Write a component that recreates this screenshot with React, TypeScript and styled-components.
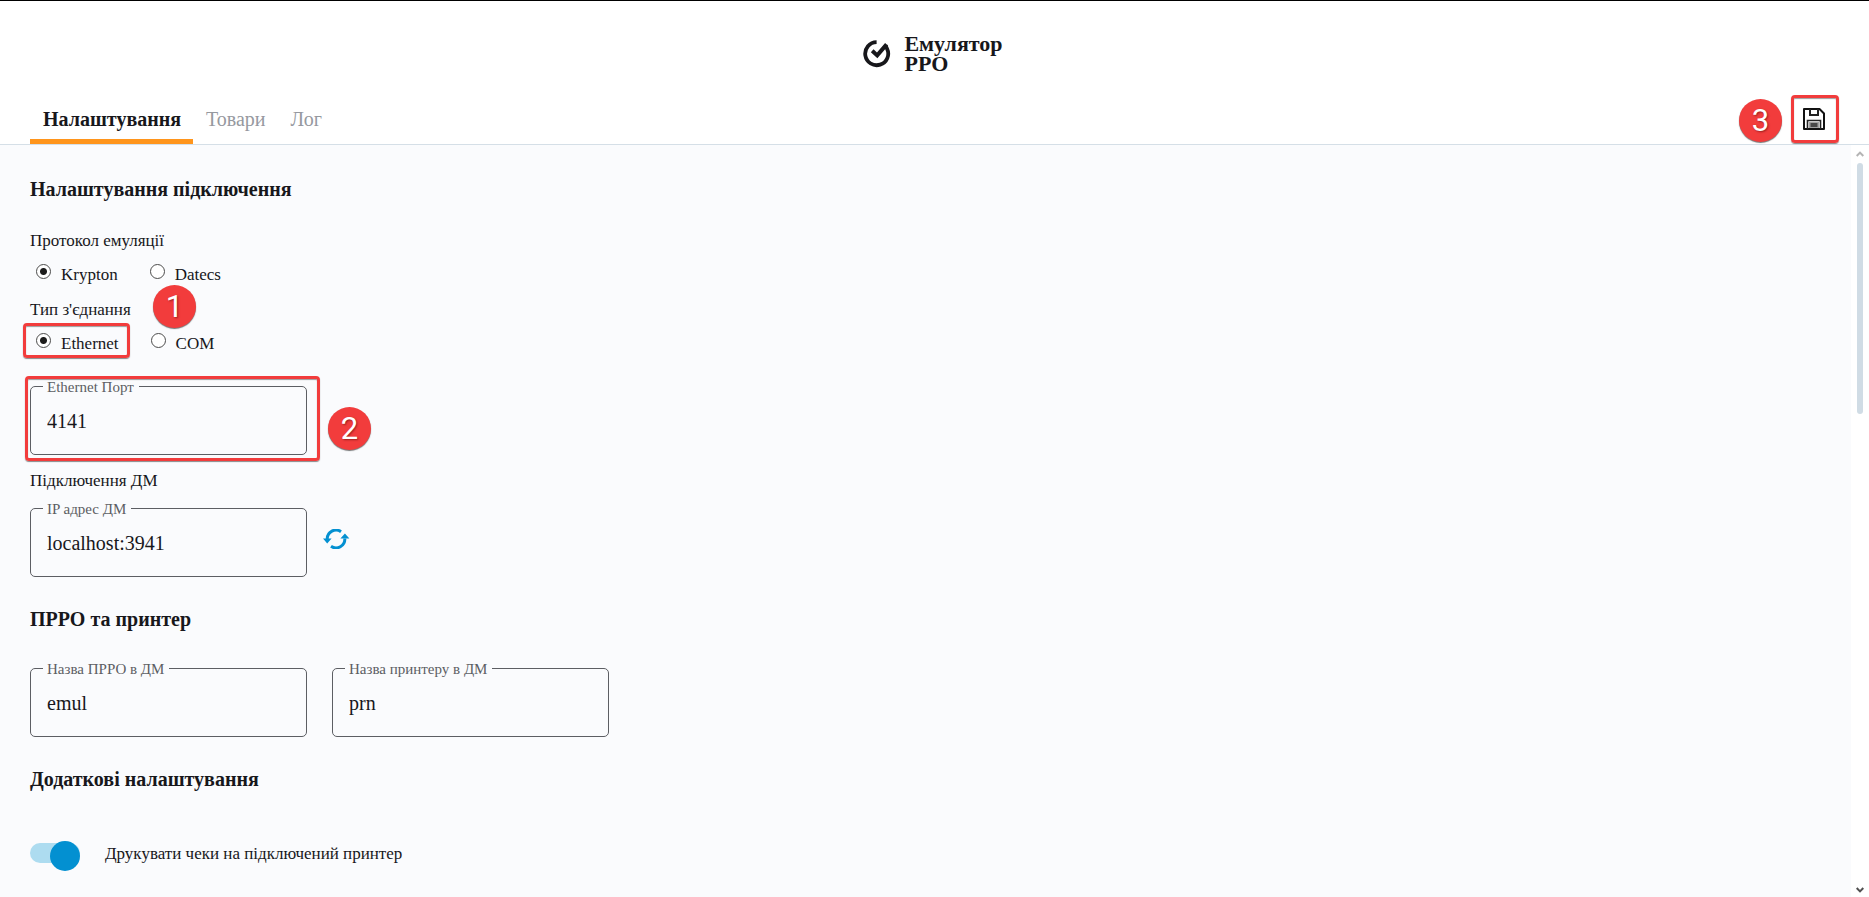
import React, { useState } from "react";
import styled, { createGlobalStyle, css } from "styled-components";

const serif = `"Liberation Serif", "Times New Roman", serif`;
const colors = {
  ink: "#17171b",
  muted: "#96999f",
  outline: "#5c5e63",
  surface: "#fafbfd",
  line: "#d5dfe7",
  accent: "#ff951c",
  blue: "#0390d1",
  blueLight: "#addcf0",
  mark: "#f23c3c",
};

const GlobalStyle = createGlobalStyle`
  *, *::before, *::after { box-sizing: border-box; }
  body { margin: 0; background: #fff; color: ${colors.ink}; font-family: ${serif}; }
  button, input { font-family: inherit; color: inherit; }
`;

const Page = styled.div`
  display: flex;
  flex-direction: column;
  min-height: 100vh;
  border-top: 1px solid #000;
`;

const Brand = styled.div`
  display: flex;
  align-items: center;
  justify-content: center;
  gap: 13px;
  padding: 33px 3px 21px 0;
`;

const BrandName = styled.h1`
  margin: 0;
  font-size: 22px;
  line-height: 20px;
`;

const Bar = styled.div`
  display: flex;
  align-items: flex-end;
  justify-content: space-between;
  padding: 0 30px;
  border-bottom: 1px solid ${colors.line};
`;

const Tabs = styled.nav`
  display: flex;
`;

const Tab = styled.button<{ $active: boolean }>`
  padding: 0 12px 8px 13px;
  border: 0;
  border-bottom: 5px solid ${(p) => (p.$active ? colors.accent : "transparent")};
  background: none;
  color: ${(p) => (p.$active ? colors.ink : colors.muted)};
  font-size: 20px;
  font-weight: ${(p) => (p.$active ? 700 : 400)};
  line-height: 24px;
  cursor: pointer;
`;

const SaveSlot = styled.div`
  position: relative;
  margin-bottom: 1px;
`;

const SaveButton = styled.button`
  display: flex;
  align-items: center;
  justify-content: center;
  width: 48px;
  height: 48px;
  padding: 0 2px 0 0;
  border: 0;
  background: none;
  cursor: pointer;
`;

const Mark = styled.span<{ $inset: string }>`
  position: absolute;
  inset: ${(p) => p.$inset};
  border: 3px solid ${colors.mark};
  border-radius: 4px;
  box-shadow: 0 1px 1px rgba(60, 60, 60, 0.6), inset 0 1px 1px rgba(60, 60, 60, 0.5);
  pointer-events: none;
`;

const Step = styled.span<{ $left: number; $top: number }>`
  position: absolute;
  left: ${(p) => p.$left}px;
  top: ${(p) => p.$top}px;
  width: 43px;
  height: 43px;
  border-radius: 50%;
  background: ${colors.mark};
  box-shadow: 0 1px 1px rgba(60, 60, 60, 0.7);
  color: #fff;
  font: 400 31px/43px Roboto, sans-serif;
  text-align: center;
  text-shadow: 1px 1px 2px rgba(70, 0, 0, 0.5);
`;

const Body = styled.div`
  display: flex;
  flex: 1;
`;

const Content = styled.main`
  flex: 1;
  padding: 32px 30px;
  background: ${colors.surface};
`;

const Section = styled.section`
  & + & {
    margin-top: 30px;
  }
`;

const Heading = styled.h2`
  margin: 0;
  font-size: 20px;
  line-height: 24px;
`;

const caption = css`
  padding: 0;
  font-size: 17px;
  line-height: 22px;
`;

const Group = styled.fieldset<{ $gap: number }>`
  position: relative;
  min-width: 0;
  margin: ${(p) => p.$gap}px 0 0;
  padding: 0;
  border: 0;
`;

const Legend = styled.legend`
  ${caption}
`;

const Caption = styled.p`
  ${caption}
  margin: 15px 0 16px;
`;

const Options = styled.div`
  display: flex;
  gap: 32px;
  padding: 12px 0 0 6px;
`;

const Option = styled.label`
  ${caption}
  position: relative;
  display: flex;
  align-items: flex-start;
  gap: 10px;
`;

const Radio = styled.input`
  appearance: none;
  width: 15px;
  height: 15px;
  margin: 0;
  border: 1px solid #4c4c4c;
  border-radius: 50%;
  background: #fff;

  &:checked {
    background: radial-gradient(circle, #1c1c1c 3px, #fff 4px);
  }
`;

const Fields = styled.div<{ $gap?: number }>`
  display: flex;
  align-items: flex-start;
  gap: 25px;
  margin-top: ${(p) => p.$gap ?? 0}px;
`;

const FieldBox = styled.div`
  position: relative;
  width: 277px;
`;

const FieldLabel = styled.label`
  position: absolute;
  left: 13px;
  top: -7px;
  padding: 0 5px 0 4px;
  background: ${colors.surface};
  color: ${colors.outline};
  font-size: 15px;
  line-height: 16px;
`;

const FieldInput = styled.input`
  display: block;
  width: 100%;
  height: 69px;
  padding: 2px 16px 0;
  border: 1px solid ${colors.outline};
  border-radius: 5px;
  background: transparent;
  font-size: 20px;
`;

const Server = styled.div`
  display: flex;
  align-items: flex-start;
  gap: 16px;
`;

const RefreshButton = styled.button`
  display: flex;
  padding: 21px 0;
  border: 0;
  background: none;
  color: ${colors.blue};
  cursor: pointer;
`;

const SwitchRow = styled.label`
  ${caption}
  display: flex;
  align-items: flex-start;
  gap: 25px;
  margin-top: 52px;
`;

const Switch = styled.input`
  appearance: none;
  position: relative;
  width: 50px;
  height: 20px;
  margin: 0;
  border-radius: 10px;
  background: #cfd4d9;
  cursor: pointer;

  &::after {
    content: "";
    position: absolute;
    left: 0;
    top: -2px;
    width: 30px;
    height: 30px;
    border-radius: 50%;
    background: #8b9097;
  }
  &:checked {
    background: ${colors.blueLight};
  }
  &:checked::after {
    left: 20px;
    background: ${colors.blue};
  }
`;

const ScrollRail = styled.div`
  display: flex;
  flex-direction: column;
  align-items: center;
  width: 18px;
  padding: 6px 0 4px;
  background: #fff;
`;

const ScrollThumb = styled.div`
  flex: 25;
  width: 6px;
  margin-top: 6px;
  border-radius: 3px;
  background: #d0dce5;
`;

const ScrollRest = styled.div`
  flex: 47;
`;

const Logo = () => (
  <svg width="28" height="28" viewBox="0 0 28 28" fill="none" stroke="#17171b" strokeWidth="3.8" aria-hidden="true">
    <path d="M13.6 2.2A11.5 11.5 0 1 0 24 8.6L22.4 5.4" />
    <path d="M9.2 10.8 14.2 15.4 23.6 4.4" strokeWidth="4" />
  </svg>
);

const SaveIcon = () => (
  <svg width="22" height="22" viewBox="0 0 22 22" fill="none" aria-hidden="true">
    <path d="M1 1H16.5L21 5.5V21H1Z" stroke="#111" strokeWidth="2" strokeLinejoin="round" />
    <path d="M7 1V7H15V1" stroke="#222" strokeWidth="2" />
    <path d="M4.5 21V12.5H17.5V21" stroke="#222" strokeWidth="1.6" />
    <rect x="6" y="14" width="10" height="6" fill="#a2a2a2" />
    <rect x="7.5" y="15" width="7" height="4" fill="#484848" />
  </svg>
);

const RefreshIcon = () => (
  <svg width="27" height="20" viewBox="0 0 27 20" fill="none" aria-hidden="true">
    <path d="M4.2 10A8.8 8.8 0 0 1 18 2.7M21.8 9.5A8.8 8.8 0 0 1 8 17.3" stroke="currentColor" strokeWidth="3" />
    <path d="M0 9.6H8.6L4.2 14.6ZM17.4 9.6H26.4L21.9 4.6Z" fill="currentColor" />
  </svg>
);

const Arrow = ({ up = false }: { up?: boolean }) => (
  <svg width="8" height="6" viewBox="0 0 8 6" fill="none" strokeWidth="2" stroke={up ? "#b4b4b4" : "#505050"} aria-hidden="true">
    <path d={up ? "M.7 5 4 1.6 7.3 5" : "M.7 1 4 4.4 7.3 1"} />
  </svg>
);

type FieldProps = { id: string; label: string; value: string; children?: React.ReactNode };

const Field = ({ id, label, value, children }: FieldProps) => (
  <FieldBox>
    <FieldInput id={id} defaultValue={value} />
    <FieldLabel htmlFor={id}>{label}</FieldLabel>
    {children}
  </FieldBox>
);

const tabNames = ["Налаштування", "Товари", "Лог"];

export default function App() {
  const [tab, setTab] = useState(tabNames[0]);

  return (
    <Page>
      <GlobalStyle />
      <header>
        <Brand>
          <Logo />
          <BrandName>
            Емулятор
            <br />
            РРО
          </BrandName>
        </Brand>
        <Bar>
          <Tabs>
            {tabNames.map((name) => (
              <Tab key={name} type="button" $active={name === tab} onClick={() => setTab(name)}>
                {name}
              </Tab>
            ))}
          </Tabs>
          <SaveSlot>
            <SaveButton type="button" aria-label="Зберегти">
              <SaveIcon />
            </SaveButton>
            <Mark $inset="0" />
            <Step $left={-52} $top={4}>3</Step>
          </SaveSlot>
        </Bar>
      </header>
      <Body>
        <Content>
          <Section>
            <Heading>Налаштування підключення</Heading>
            <Group $gap={29}>
              <Legend>Протокол емуляції</Legend>
              <Options>
                <Option>
                  <Radio type="radio" name="protocol" defaultChecked />
                  Krypton
                </Option>
                <Option>
                  <Radio type="radio" name="protocol" />
                  Datecs
                </Option>
              </Options>
            </Group>
            <Group $gap={13}>
              <Legend>Тип з'єднання</Legend>
              <Options>
                <Option>
                  <Radio type="radio" name="connection" defaultChecked />
                  Ethernet
                  <Mark $inset="-10px -11px -3px -13px" />
                </Option>
                <Option>
                  <Radio type="radio" name="connection" />
                  COM
                </Option>
              </Options>
              <Step $left={123} $top={-36}>1</Step>
            </Group>
            <Fields $gap={31}>
              <Field id="port" label="Ethernet Порт" value="4141">
                <Mark $inset="-10px -13px -6px -5px" />
                <Step $left={298} $top={21}>2</Step>
              </Field>
            </Fields>
            <Caption>Підключення ДМ</Caption>
            <Server>
              <Field id="address" label="IP адрес ДМ" value="localhost:3941" />
              <RefreshButton type="button" aria-label="Оновити">
                <RefreshIcon />
              </RefreshButton>
            </Server>
          </Section>
          <Section>
            <Heading>ПРРО та принтер</Heading>
            <Fields $gap={37}>
              <Field id="prro" label="Назва ПРРО в ДМ" value="emul" />
              <Field id="printer" label="Назва принтеру в ДМ" value="prn" />
            </Fields>
          </Section>
          <Section>
            <Heading>Додаткові налаштування</Heading>
            <SwitchRow>
              <Switch type="checkbox" role="switch" defaultChecked />
              Друкувати чеки на підключений принтер
            </SwitchRow>
          </Section>
        </Content>
        <ScrollRail>
          <Arrow up />
          <ScrollThumb />
          <ScrollRest />
          <Arrow />
        </ScrollRail>
      </Body>
    </Page>
  );
}
